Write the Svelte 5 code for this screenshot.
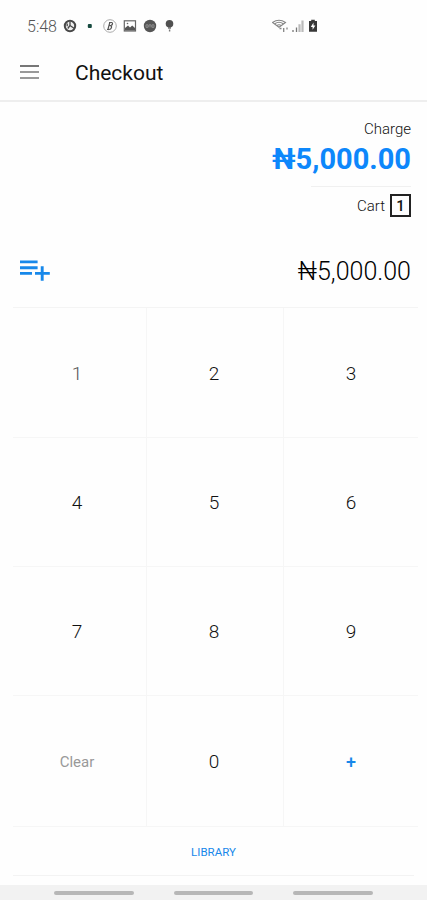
<script>
  let amount = $state(5000);
  let cartCount = $state(1);

  const keys = ['1', '2', '3', '4', '5', '6', '7', '8', '9', 'Clear', '0', '+'];

  let formatted = $derived('₦' + amount.toLocaleString('en-US', { minimumFractionDigits: 2 }));

  function press(key) {
    if (key === 'Clear') {
      amount = 0;
    } else if (key === '+') {
      cartCount += 1;
    } else {
      amount = amount * 10 + Number(key) / 100;
    }
  }
</script>

<div class="screen">
  <div class="status-bar">
    <span class="time">5:48</span>
    <div class="notifications">
      <svg width="14" height="14" viewBox="0 0 14 14">
        <circle cx="7" cy="7" r="5.2" fill="#eee" stroke="#484848" stroke-width="2" />
        <path d="M7 2.5v4L4.8 9.5M7 6.5l4 2.8M4.2 4.5v2.8" fill="none" stroke="#484848" stroke-width="1.3" />
      </svg>
      <svg width="14" height="14" viewBox="0 0 14 14">
        <rect x="4.8" y="5" width="4" height="4" rx="1" fill="#174b40" />
      </svg>
      <svg width="14" height="14" viewBox="0 0 14 14">
        <circle cx="7" cy="7" r="6.3" fill="none" stroke="#aaa" />
        <path d="M6 3.5h2.6c1.6 0 1 3-1 3h-1M6.8 6.5c3 0 1.8 4-.8 4H4M6.8 3.5 4.8 11" fill="none" stroke="#555" stroke-width="1.2" />
      </svg>
      <svg width="14" height="14" viewBox="0 0 14 14">
        <rect x="1.3" y="1.8" width="11.2" height="10.2" fill="none" stroke="#666" stroke-width="1.2" />
        <path d="M2 11.5V9l3-2.4 2 2 2.2-2L12 9v2.5z" fill="#555" />
        <circle cx="4.5" cy="4.5" r=".8" fill="#666" />
      </svg>
      <svg width="14" height="14" viewBox="0 0 14 14">
        <circle cx="7" cy="7" r="6.2" fill="#555" />
        <path d="M3 5.8h2v2.5H3zM6 8.4V5.8h2v2.6M9 5.8h2v2.5H9z" fill="none" stroke="#999" stroke-width=".8" />
      </svg>
      <svg width="14" height="14" viewBox="0 0 14 14">
        <circle cx="6.5" cy="4.8" r="3.8" fill="#505050" />
        <path d="M5 8h3v1.7H5zM5.9 10.5h1.4v2H5.9z" fill="#777" />
      </svg>
    </div>
    <div class="signals">
      <svg width="18" height="14" viewBox="0 0 18 14">
        <path d="M.5 3.5q6.5-4.5 13 0L7 8.2zM2.8 4.8q4.2-3 8.4 0M5 6.5q2-1.5 4 0" fill="none" stroke="#858585" stroke-width="1.1" />
        <path d="M7.5 9.5h2M11.7 9v4M15 8.5v2" stroke="#858585" stroke-width="1.3" />
      </svg>
      <svg width="14" height="14" viewBox="0 0 14 14">
        <path d="M1 13v-2M4.5 13V8.5" stroke="#777" stroke-width="1.3" />
        <path d="M7.5 13V5.2M10.5 13V1.5" stroke="#bbb" stroke-width="2.2" />
      </svg>
      <svg width="10" height="14" viewBox="0 0 10 14">
        <path d="M3.2.8h3.6v1.3H9v10.7H1V2.1h2.2z" fill="#383838" />
        <path d="M5.5 3.5 2.8 8h1.8v2.8L7.4 6.5H5.5z" fill="#fff" />
      </svg>
    </div>
  </div>

  <header class="app-bar">
    <button class="menu" aria-label="Menu">
      <span></span>
      <span></span>
      <span></span>
    </button>
    <h1>Checkout</h1>
  </header>

  <section class="summary">
    <div class="charge-label">Charge</div>
    <div class="charge-total">{formatted}</div>
    <div class="cart">
      <span>Cart</span>
      <span class="cart-count">{cartCount}</span>
    </div>
  </section>

  <section class="entry">
    <svg width="31" height="24" viewBox="0 0 31 24">
      <path d="M0 2.9h17.6M0 8.7h17.6M0 14.4h12M15 14.4h14.8M22.2 7.3v14.5" fill="none" stroke="#1788ea" stroke-width="2.9" />
    </svg>
    <span class="entry-amount">{formatted}</span>
  </section>

  <div class="keypad">
    {#each keys as key}
      <button
        class="key"
        class:clear={key === 'Clear'}
        class:add={key === '+'}
        class:first={key === '1'}
        onclick={() => press(key)}
      >
        {key}
      </button>
    {/each}
  </div>

  <div class="library">
    <button>LIBRARY</button>
  </div>

  <nav class="system-nav">
    <span></span>
    <span></span>
    <span></span>
  </nav>
</div>

<style>
  :global(body) {
    background: #fefefe;
  }

  .screen {
    display: flex;
    flex-direction: column;
    width: 427px;
    height: 900px;
    overflow: hidden;
    background: #fefefe;
    color: #222;
    font-family: Roboto, "Noto Sans", sans-serif;
  }

  svg {
    display: block;
    flex: none;
  }

  button {
    padding: 0;
    border: 0;
    background: none;
    font: inherit;
    color: inherit;
  }

  .status-bar {
    display: flex;
    align-items: center;
    height: 46px;
    padding: 6px 0 0 27px;
    box-sizing: border-box;
  }

  .time {
    width: 36px;
    font-size: 16px;
    font-weight: 300;
    color: #555;
  }

  .notifications {
    display: flex;
    gap: 6px;
  }

  .signals {
    display: flex;
    gap: 2px;
    margin-left: 95px;
  }

  .app-bar {
    display: flex;
    align-items: center;
    height: 54px;
    padding-left: 20px;
    border-bottom: 2px solid #eee;
  }

  .menu {
    display: flex;
    flex-direction: column;
    gap: 4px;
    width: 19px;
    margin: 0 36px 2px 0;
  }

  .menu span {
    height: 2px;
    background: #999;
  }

  .menu span:first-child {
    background: #777;
  }

  h1 {
    margin: 0;
    font-size: 21px;
    font-weight: 400;
    color: #111;
  }

  .summary {
    display: flex;
    flex-direction: column;
    align-items: flex-end;
    height: 133px;
    padding: 18px 16px 0 0;
    box-sizing: border-box;
  }

  .charge-label {
    font-size: 15px;
    line-height: 18px;
    font-weight: 300;
    color: #111;
  }

  .charge-total {
    padding-top: 1px;
    font-size: 29px;
    line-height: 40px;
    font-weight: 700;
    color: #0d87fb;
  }

  .cart {
    display: flex;
    align-items: center;
    justify-content: flex-end;
    gap: 5px;
    width: 100px;
    margin-top: 7px;
    padding-top: 7px;
    border-top: 1px solid #f0f0f0;
    font-size: 15px;
    font-weight: 300;
    color: #111;
  }

  .cart-count {
    width: 17px;
    height: 19px;
    border: 2px solid #222;
    line-height: 20px;
    text-align: center;
    font-weight: 500;
  }

  .entry {
    display: flex;
    align-items: center;
    justify-content: space-between;
    height: 72px;
    padding: 0 16px 0 20px;
  }

  .entry-amount {
    font-size: 25px;
    font-weight: 300;
    color: #000;
  }

  .keypad {
    display: grid;
    grid-template-columns: 134px 137px 134px;
    grid-template-rows: 130px 129px 129px 131px;
    margin-left: 13px;
    width: 405px;
    border-top: 1px solid #f4f4f4;
  }

  .key {
    padding: 1px 2px 0 0;
    border-right: 1px solid #f6f6f6;
    border-bottom: 1px solid #f6f6f6;
    font-size: 19px;
    font-weight: 300;
    color: #111;
  }

  .key:nth-child(3n + 1) {
    padding-right: 5px;
  }

  .key:nth-child(3n) {
    padding-right: 0;
    border-right: 0;
  }

  .key.first {
    color: #555;
  }

  .key.clear {
    font-size: 15px;
    font-weight: 400;
    color: #999;
  }

  .key.add {
    font-size: 18px;
    font-weight: 500;
    color: #1788ea;
  }

  .library {
    display: flex;
    align-items: center;
    justify-content: center;
    height: 49px;
    margin: 0 13px;
    padding-top: 1px;
    box-sizing: border-box;
    border-bottom: 1px solid #f3f3f3;
  }

  .library button {
    font-size: 11.5px;
    color: #1788ea;
  }

  .system-nav {
    display: flex;
    justify-content: center;
    gap: 40px;
    height: 15px;
    margin-top: auto;
    padding-top: 6px;
    box-sizing: border-box;
    background: #f2f2f2;
  }

  .system-nav span {
    width: 79.5px;
    height: 4px;
    border-radius: 2px;
    background: #b7b7b7;
  }
</style>
